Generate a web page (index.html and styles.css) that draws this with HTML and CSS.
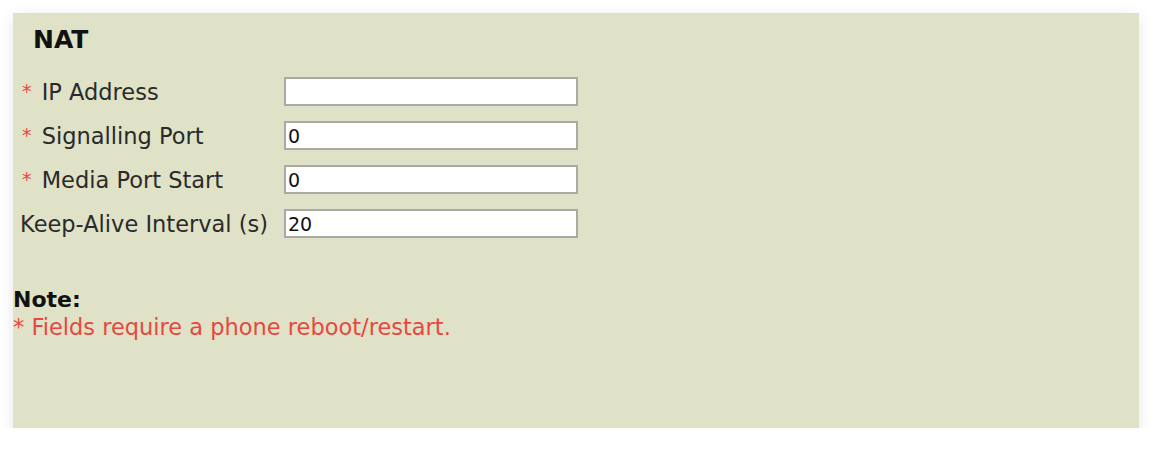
FILE: index.html
```html
<!DOCTYPE html>
<html>
<head>
<meta charset="utf-8">
<link rel="stylesheet" href="styles.css">
</head>
<body>
<div class="panel">
  <h2 class="title">NAT</h2>
  <div class="form">
    <div class="row">
      <label class="label"><span class="req">*</span> IP Address</label>
      <input class="field" type="text" value="">
    </div>
    <div class="row">
      <label class="label"><span class="req">*</span> Signalling Port</label>
      <input class="field" type="text" value="0">
    </div>
    <div class="row">
      <label class="label"><span class="req">*</span> Media Port Start</label>
      <input class="field" type="text" value="0">
    </div>
    <div class="row">
      <label class="label">Keep-Alive Interval (s)</label>
      <input class="field" type="text" value="20">
    </div>
  </div>
  <div class="note">
    <div class="note-title">Note:</div>
    <div class="note-text">* Fields require a phone reboot/restart.</div>
  </div>
</div>
</body>
</html>
```
FILE: styles.css
```css
html, body {
  margin: 0;
  padding: 0;
  background: #ffffff;
}
body {
  font-family: "DejaVu Sans", Verdana, sans-serif;
  color: #222;
}
.panel {
  margin: 13px 0 0 13px;
  width: 1126px;
  height: 415px;
  box-sizing: border-box;
  background: #dfe2c7;
  box-shadow: 0 4px 14px rgba(0, 0, 0, 0.10);
  padding-top: 15px;
}
.title {
  margin: 0 0 0 20px;
  font-size: 25px;
  font-weight: bold;
  color: #111;
  line-height: 24px;
}
.form {
  margin-top: 25px;
  padding-left: 7px;
  display: flex;
  flex-direction: column;
  gap: 15px;
}
.row {
  display: flex;
  align-items: center;
  height: 29px;
}
.label {
  width: 264px;
  font-size: 22.5px;
  color: #2a2a2a;
  white-space: nowrap;
}
.req {
  color: #e8473f;
  font-size: 19px;
  position: relative;
  top: -2px;
  margin-left: 2px;
  margin-right: 3px;
}
.field {
  width: 294px;
  height: 29px;
  box-sizing: border-box;
  border: 2px solid #a9aaa4;
  background: #fff;
  font-family: "DejaVu Sans", Verdana, sans-serif;
  font-size: 19px;
  padding: 0 2px;
  margin: 0;
  color: #111;
}
.note {
  margin-top: 49px;
}
.note-title {
  font-weight: bold;
  font-size: 22px;
  color: #111;
  line-height: 26px;
}
.note-text {
  font-size: 22.5px;
  color: #e8473f;
  line-height: 28px;
}
```
